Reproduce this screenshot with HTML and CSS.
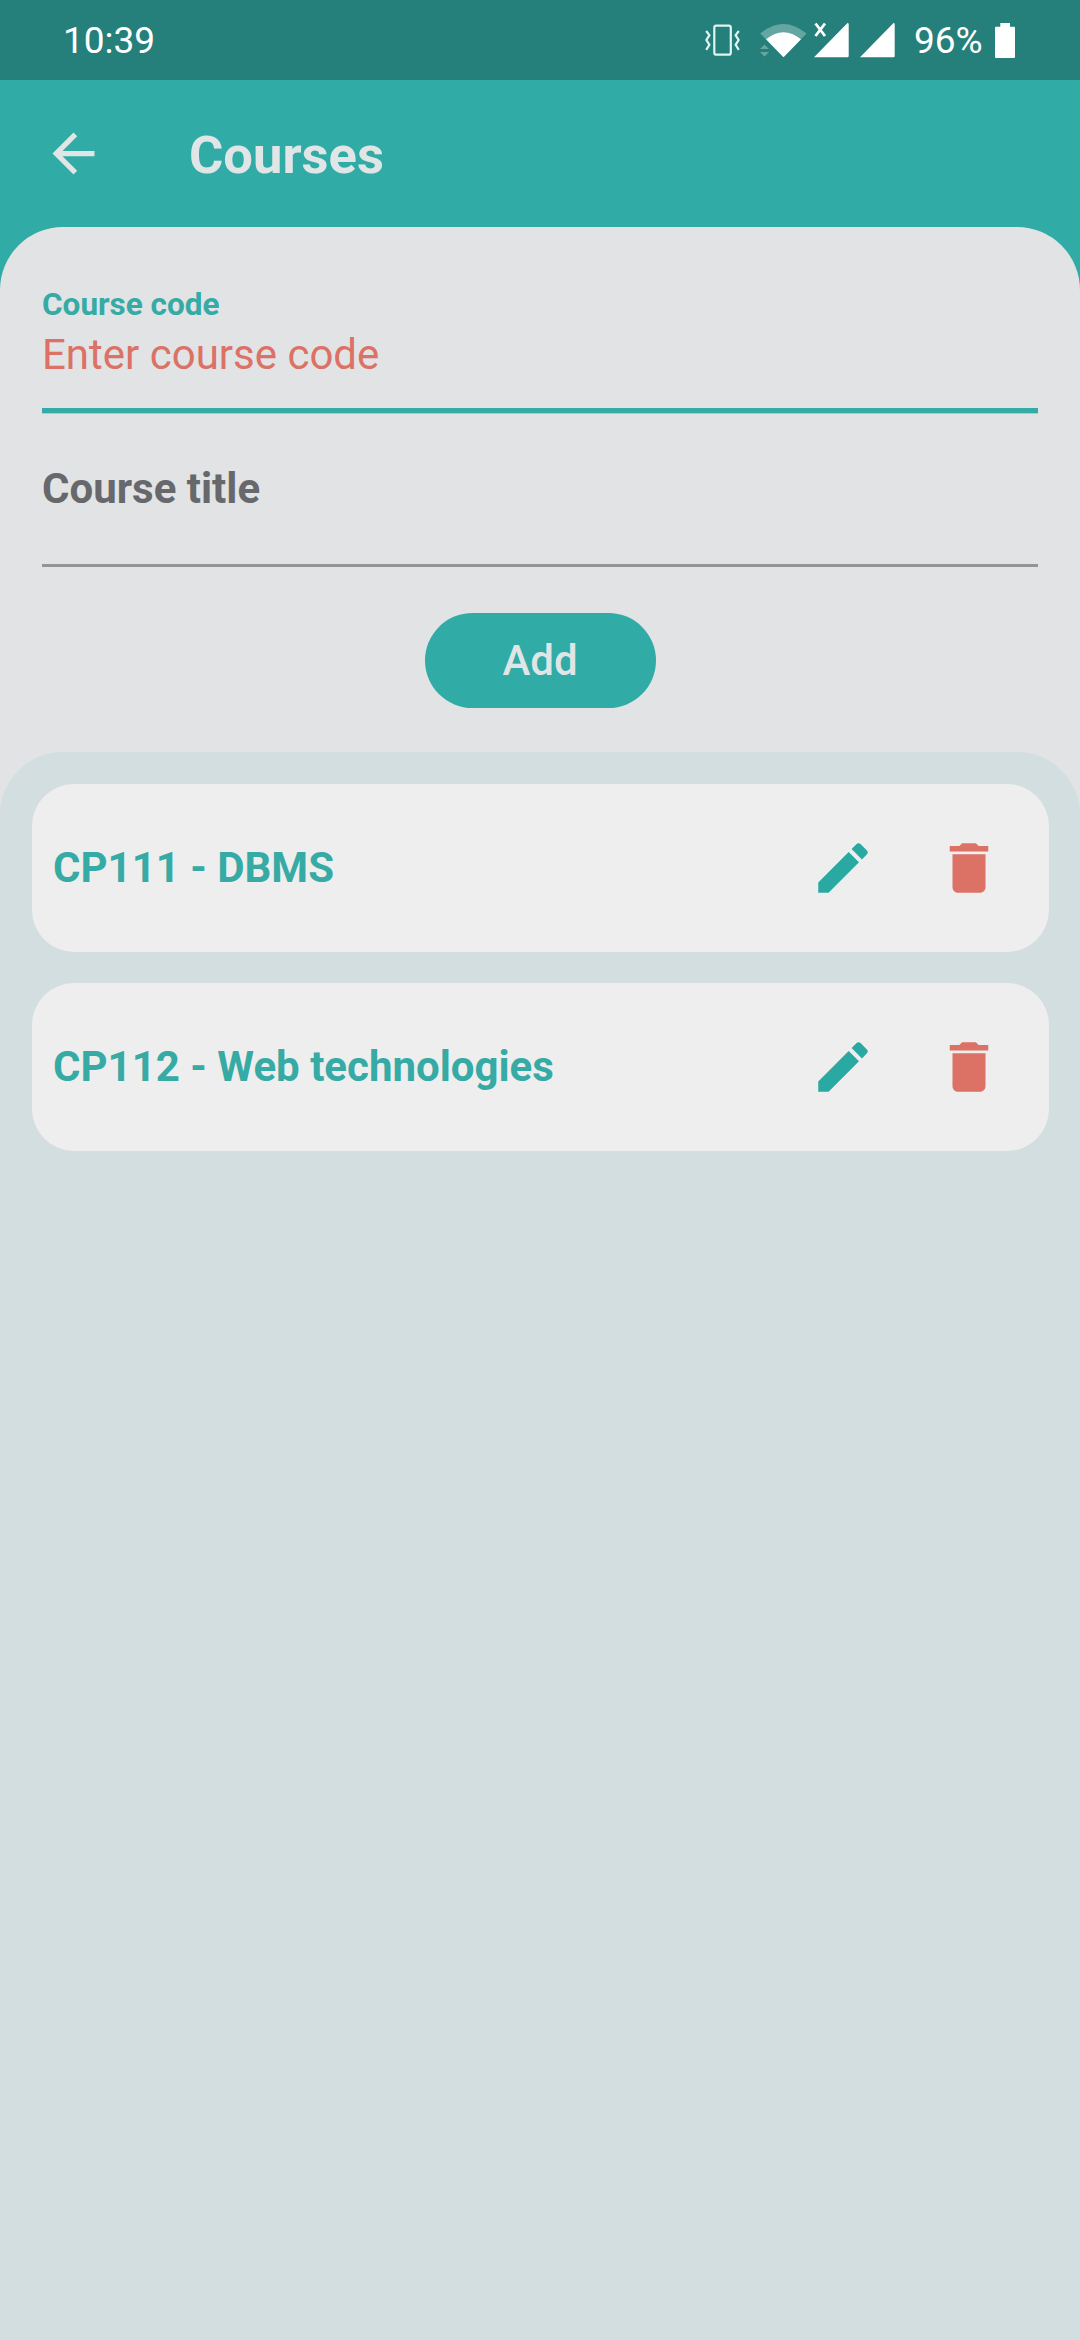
FILE: index.html
```html
<!DOCTYPE html>
<html lang="en">
<head>
<meta charset="utf-8">
<title>Courses</title>
<link rel="stylesheet" href="styles.css">
</head>
<body>
<div class="status-bar">
  <span class="clock">10:39</span>
  <svg class="status-icons" viewBox="0 0 195 80" aria-hidden="true">
    <g fill="none" stroke="#dff5f1" stroke-width="2.2">
      <rect x="14.300" y="25.700" width="16.500" height="29" rx="2"/>
      <path d="M6.200 31l3.200 4.200-3 4.800 3 4.800-3.200 5M38.800 31l-3.200 4.200 3 4.800-3 4.800 3.200 5"/>
    </g>
    <g transform="translate(20 0)">
      <path d="M40.300 33.500Q63.300 14.500 86.500 33.500L63.500 57.300Z" fill="#65a6a2"/>
      <path d="M46 39.300Q63.500 25 81 39.300L63.500 57.300Z" fill="#fff"/>
      <path d="M40 49l4.500-4.500 4.500 4.500zM40 52h9l-4.500 4.500z" fill="#65a6a2"/>
      <path d="M95.500 23.500l9.500 12.500M105 23.500l-9.500 12.500" stroke="#fff" stroke-width="2.800" fill="none"/>
      <path d="M94 57.300L127.500 23q1.200 0 1.200 1.200V56q0 1.300-1.300 1.300zM140 57.300L173.500 23q1.200 0 1.200 1.200V56q0 1.300-1.300 1.300z" fill="#fff"/>
    </g>
  </svg>
  <span class="battery-level">96%</span>
  <svg class="battery" viewBox="0 0 20 35" aria-hidden="true"><path d="M5.300 0h9.700v3.700H19q1 0 1 1V34q0 1-1 1H1q-1 0-1-1V4.700q0-1 1-1h4.300z" fill="#fff"/></svg>
</div>
<header class="app-bar">
  <svg class="back" viewBox="0 0 24 24" aria-label="Back"><path d="M20 11H7.830l5.590-5.590L12 4l-8 8 8 8 1.410-1.410L7.830 13H20v-2z"/></svg>
  <h1 class="title">Courses</h1>
</header>
<main class="sheet">
  <form class="course-form">
    <div class="field field-active">
      <span class="field-label">Course code</span>
      <span class="field-hint">Enter course code</span>
    </div>
    <div class="field field-idle">
      <span class="field-placeholder">Course title</span>
    </div>
    <button class="add" type="button">Add</button>
  </form>
  <section class="course-list">
    <article class="card">
      <span class="course-name">CP111 - DBMS</span>
      <svg class="action edit" viewBox="0 0 24 24" aria-label="Edit"><path d="M3 17.250V21h3.750L17.810 9.940l-3.750-3.750L3 17.250zM20.710 7.040c.39-.39.39-1.020 0-1.410l-2.340-2.340c-.39-.39-1.020-.39-1.410 0l-1.830 1.830 3.750 3.750 1.830-1.830z"/></svg>
      <svg class="action delete" viewBox="0 0 24 24" aria-label="Delete"><path d="M6 19c0 1.100.9 2 2 2h8c1.100 0 2-.9 2-2V7H6v12zM19 4h-3.500l-1-1h-5l-1 1H5v2h14V4z"/></svg>
    </article>
    <article class="card">
      <span class="course-name">CP112 - Web technologies</span>
      <svg class="action edit" viewBox="0 0 24 24" aria-label="Edit"><path d="M3 17.250V21h3.750L17.810 9.940l-3.750-3.750L3 17.250zM20.710 7.040c.39-.39.39-1.020 0-1.410l-2.340-2.340c-.39-.39-1.020-.39-1.410 0l-1.830 1.830 3.750 3.750 1.830-1.830z"/></svg>
      <svg class="action delete" viewBox="0 0 24 24" aria-label="Delete"><path d="M6 19c0 1.100.9 2 2 2h8c1.100 0 2-.9 2-2V7H6v12zM19 4h-3.500l-1-1h-5l-1 1H5v2h14V4z"/></svg>
    </article>
  </section>
</main>
</body>
</html>
```
FILE: styles.css
```css
* {
  box-sizing: border-box;
}

body {
  margin: 0;
  width: 1080px;
  height: 2340px;
  display: flex;
  flex-direction: column;
  overflow: hidden;
  background: #30aba6;
  font-family: Roboto, "Liberation Sans", sans-serif;
}

svg {
  display: block;
  flex: none;
}

.status-bar {
  display: flex;
  align-items: center;
  height: 80px;
  padding: 0 65px 0 63px;
  background: #257f7b;
  color: #fff;
  font-size: 37px;
  line-height: 44px;
}

.clock {
  margin-right: auto;
  padding-top: 2px;
}

.status-icons {
  width: 195px;
  height: 80px;
}

.battery-level {
  width: 100px;
  padding: 2px 0 0 19px;
}

.battery {
  width: 20px;
  height: 35px;
}

.app-bar {
  display: flex;
  align-items: center;
  height: 147px;
  padding-left: 42px;
}

.back {
  width: 63px;
  height: 63px;
  fill: #e0e5e6;
}

.title {
  margin: 0 0 0 84px;
  padding-top: 3px;
  color: #e0e5e6;
  font-size: 52.5px;
  font-weight: 700;
  line-height: 62px;
}

.sheet {
  flex: 1;
  display: flex;
  flex-direction: column;
  border-radius: 63px 63px 0 0;
  background: #e1e3e5;
}

.course-form {
  display: flex;
  flex-direction: column;
  height: 525px;
  padding: 58px 42px 0;
}

.field {
  display: flex;
  flex-direction: column;
  font-size: 42px;
}

.field-active {
  height: 128px;
  border-bottom: 5px solid #36aaa4;
  box-shadow: 0 1px #a3cfce;
}

.field-label {
  color: #36aaa4;
  font-size: 31.5px;
  font-weight: 700;
  line-height: 40px;
}

.field-hint {
  color: #dc7165;
  line-height: 60px;
}

.field-idle {
  height: 154px;
  padding-top: 46px;
  border-bottom: 3px solid #929496;
}

.field-placeholder {
  color: #67686b;
  font-weight: 700;
  line-height: 60px;
}

.add {
  align-self: center;
  width: 231px;
  height: 95px;
  margin-top: 46px;
  padding: 0;
  border: 0;
  border-radius: 48px;
  background: #30aba6;
  color: #e0e5e6;
  font: 500 42px/95px Roboto, "Liberation Sans", sans-serif;
}

.course-list {
  flex: 1;
  display: flex;
  flex-direction: column;
  gap: 31px;
  padding: 32px 31px 0 32px;
  border-radius: 63px 63px 0 0;
  background: #d3dee0;
}

.card {
  display: flex;
  align-items: center;
  height: 168px;
  padding: 0 47px 0 21px;
  border-radius: 42px;
  background: #eee;
}

.course-name {
  margin-right: auto;
  color: #36aaa4;
  font-size: 42px;
  font-weight: 700;
  line-height: 60px;
}

.action {
  width: 66px;
  height: 66px;
}

.edit {
  margin-right: 60px;
  fill: #29a9a1;
}

.delete {
  fill: #dc7165;
}
```
